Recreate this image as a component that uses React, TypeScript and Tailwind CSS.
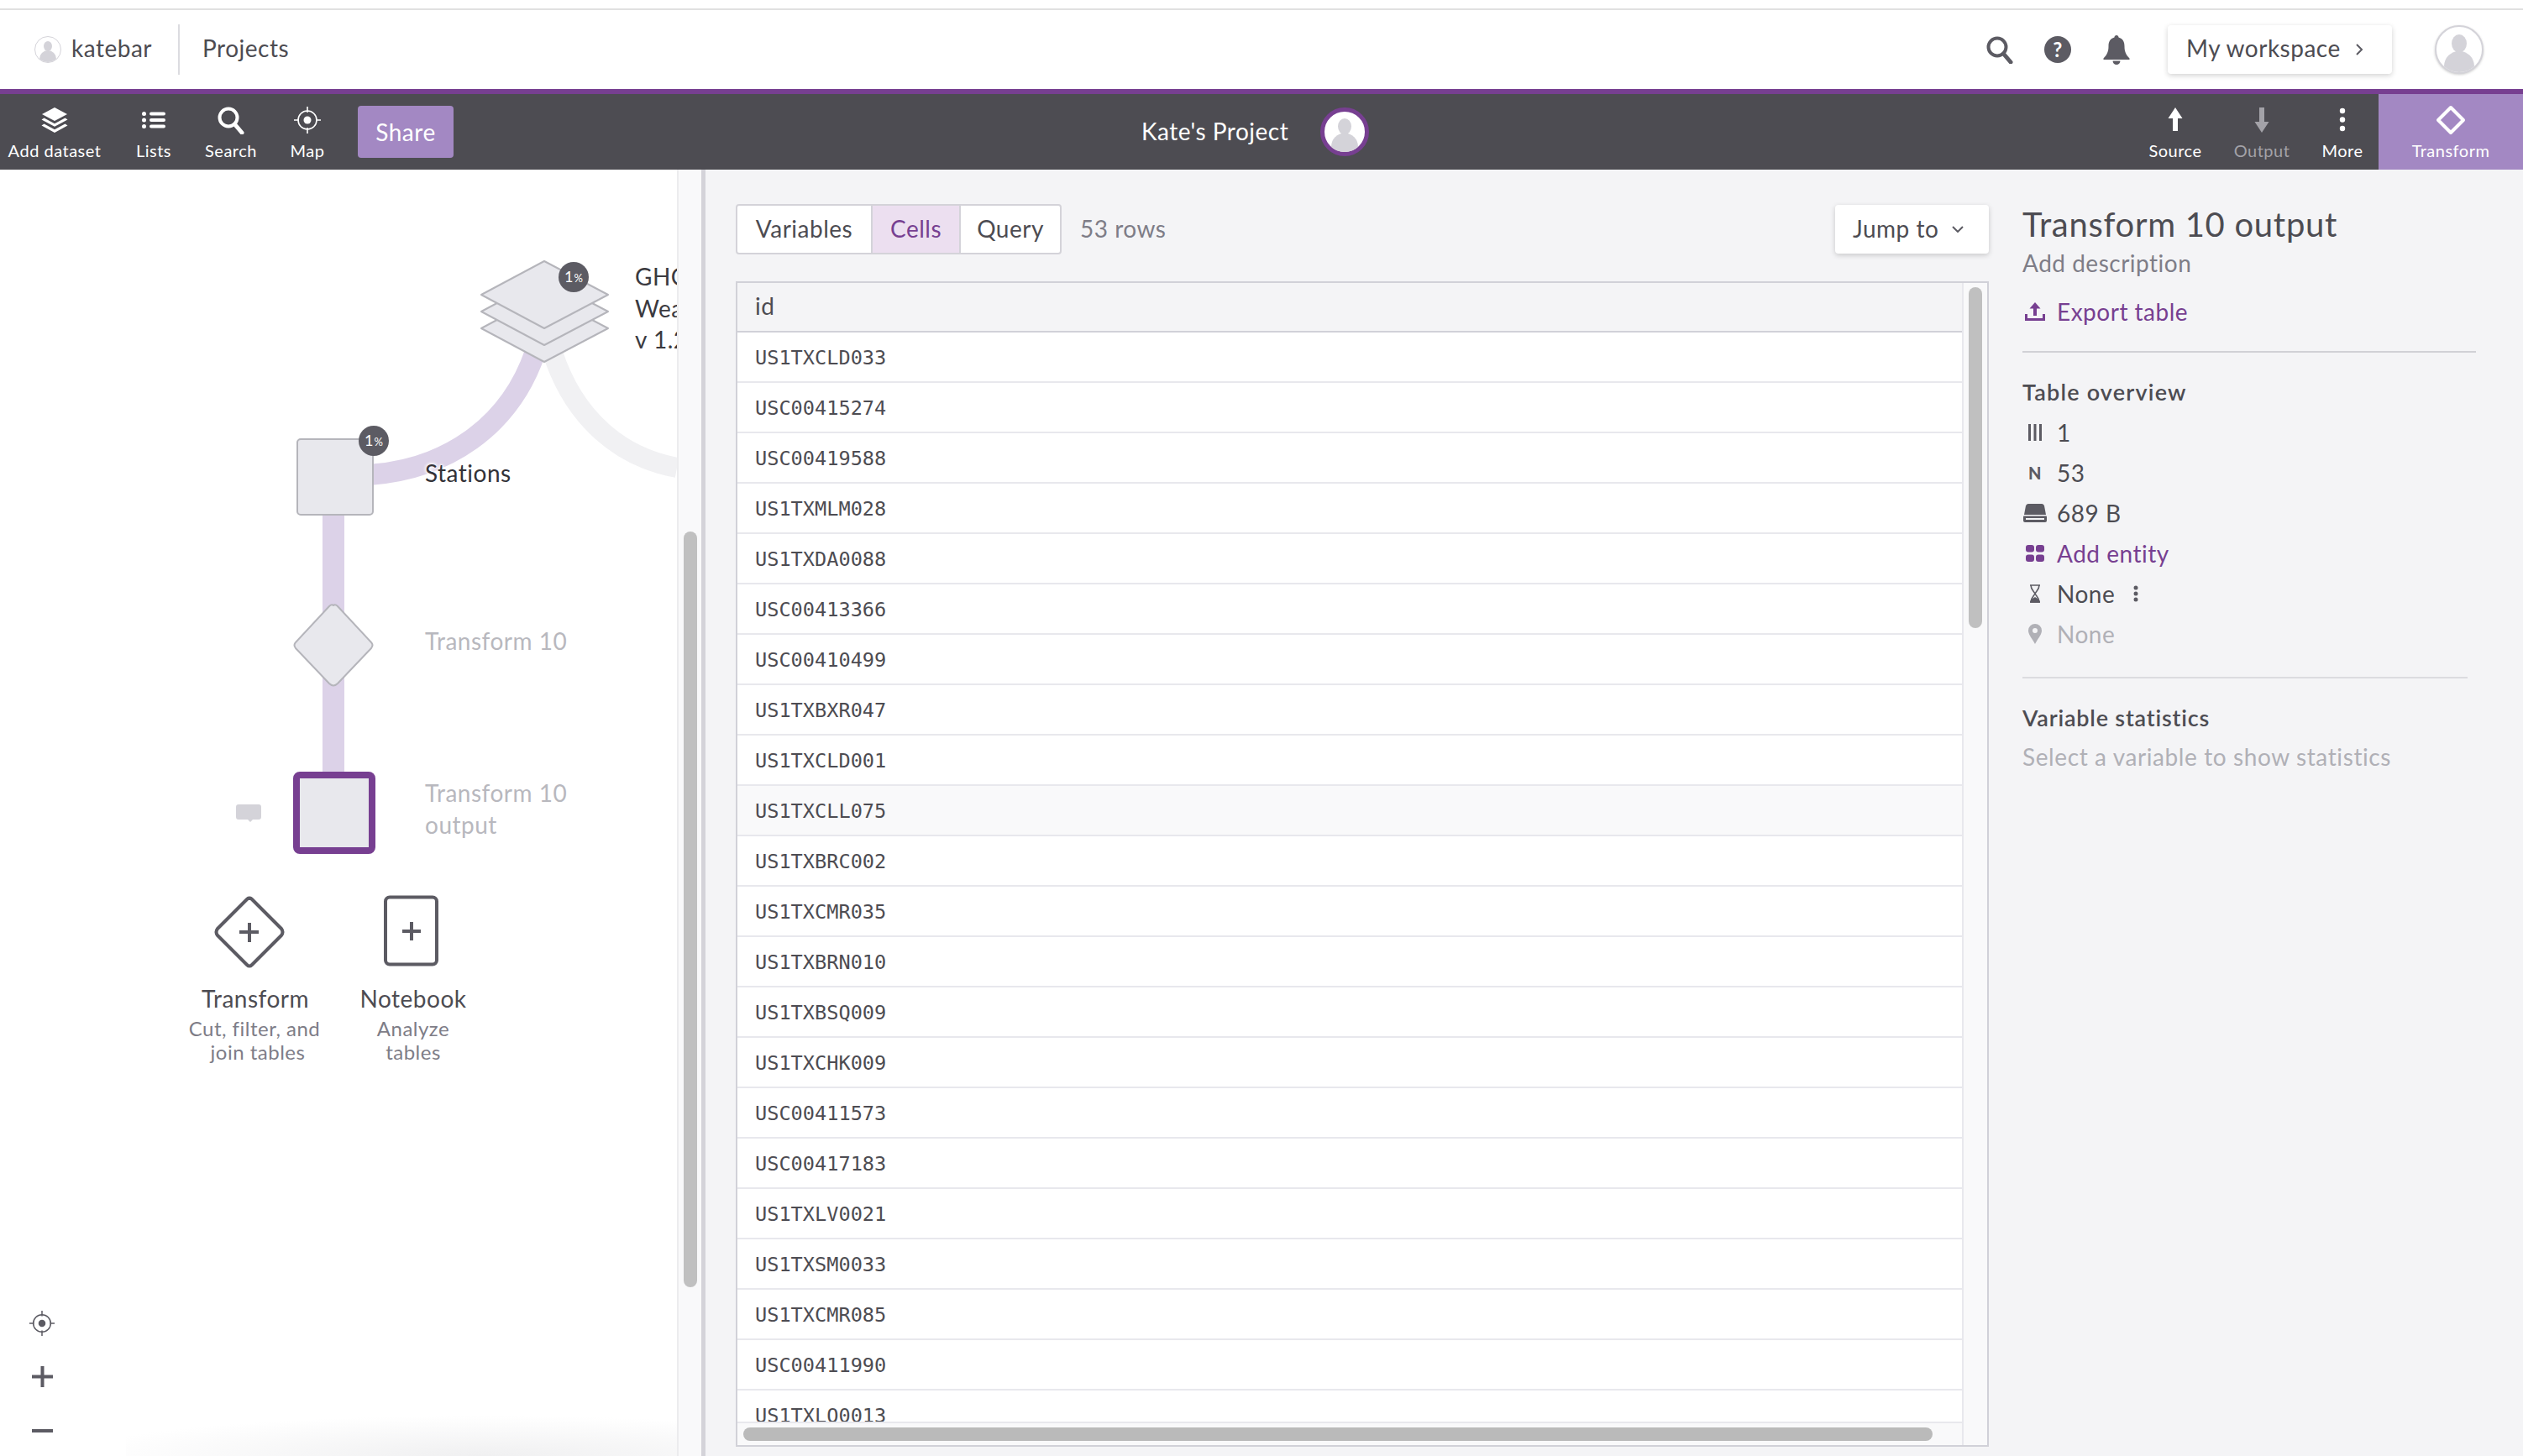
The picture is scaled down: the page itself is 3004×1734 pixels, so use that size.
import type { ReactNode } from "react";

const rowIds = [
  "US1TXCLD033", "USC00415274", "USC00419588", "US1TXMLM028", "US1TXDA0088", "USC00413366",
  "USC00410499", "US1TXBXR047", "US1TXCLD001", "US1TXCLL075", "US1TXBRC002", "US1TXCMR035",
  "US1TXBRN010", "US1TXBSQ009", "US1TXCHK009", "USC00411573", "USC00417183", "US1TXLV0021",
  "US1TXSM0033", "US1TXCMR085", "USC00411990", "US1TXLO0013",
];

function Avatar({ size, ring }: { size: string; ring: string }) {
  return (
    <div className={`${size} ${ring} rounded-full overflow-hidden bg-white shrink-0`}>
      <svg viewBox="0 0 60 60" className="w-full h-full">
        <ellipse cx="30" cy="22" rx="10" ry="12" fill="#d4d3d9" />
        <ellipse cx="30" cy="52" rx="20" ry="20" fill="#d4d3d9" />
      </svg>
    </div>
  );
}

function SearchIcon({ color }: { color: string }) {
  return (
    <svg width="34" height="34" viewBox="0 0 34 34" fill="none" stroke={color}>
      <circle cx="14" cy="14" r="10.5" strokeWidth="4" />
      <path d="M21.5 22 L30 32" strokeWidth="5" strokeLinecap="round" />
    </svg>
  );
}

function TargetIcon({ color, size }: { color: string; size: number }) {
  return (
    <svg width={size} height={size} viewBox="0 0 34 34" fill="none" stroke={color} strokeWidth="1.6">
      <circle cx="17" cy="17" r="11" />
      <circle cx="17" cy="17" r="4.5" fill={color} stroke="none" />
      <path d="M17 1V8M17 26V33M1 17H7M27 17H33" />
    </svg>
  );
}

function ToolItem({ icon, label, width, muted }: { icon: ReactNode; label: string; width: string; muted?: boolean }) {
  return (
    <div className={`${width} flex flex-col items-center pt-[14px] shrink-0`}>
      <div className="h-[34px] flex items-center justify-center">{icon}</div>
      <div className={`mt-[7px] text-[20px] leading-[24px] whitespace-nowrap ${muted ? "text-[#a3a2a8]" : "text-white"}`}>
        {label}
      </div>
    </div>
  );
}

function Header() {
  return (
    <div className="h-[94px] flex items-center pl-[41px] bg-white text-[#4d4c52]">
      <Avatar size="w-[32px] h-[32px]" ring="border border-[#d4d3d9]" />
      <span className="ml-[12px] pb-[4px] text-[28px]">katebar</span>
      <div className="ml-[31px] w-[2px] h-[60px] bg-[#dcdce0]" />
      <span className="ml-[27px] pb-[4px] text-[28px]">Projects</span>
      <div className="ml-auto flex items-center">
        <SearchIcon color="#5c5b63" />
        <div className="ml-[36px] w-[32px] h-[32px] rounded-full bg-[#5c5b63] text-white text-[24px] font-bold flex items-center justify-center">
          ?
        </div>
        <svg className="ml-[36px]" width="36" height="36" viewBox="0 0 36 36" fill="#5c5b63">
          <path d="M18 1c1.5 0 2.5 1 2.5 2.6C25.5 5 27.5 9 27.5 14c0 6 1.5 10 6 14.5v1.5H2.5v-1.5C7 24 8.500 20 8.500 14c0-5 2-9 7-10.400C15.500 2 16.500 1 18 1z" />
          <path d="M13.500 31.500h9c0 2.500-2 4.500-4.500 4.500s-4.500-2-4.500-4.500z" />
        </svg>
        <div className="ml-[43px] w-[267px] h-[58px] bg-white rounded-[4px] shadow-[0_2px_6px_rgba(0,0,0,0.18)] flex items-center pl-[22px] text-[28px]">
          <span className="pb-[4px]">My workspace</span>
          <svg className="ml-[17px]" width="10" height="16" viewBox="0 0 10 16" fill="none" stroke="#5c5b63" strokeWidth="2">
            <path d="M2 2l6 6-6 6" />
          </svg>
        </div>
        <div className="ml-[51px] mr-[47px]">
          <Avatar size="w-[58px] h-[58px]" ring="border-2 border-[#d4d3d9] shadow-[0_1px_3px_rgba(0,0,0,0.2)]" />
        </div>
      </div>
    </div>
  );
}

function Toolbar() {
  return (
    <div className="h-[90px] flex bg-[#4d4c52] text-white">
      <ToolItem
        width="w-[130px]"
        label="Add dataset"
        icon={
          <svg width="34" height="30" viewBox="0 0 34 30" fill="white">
            <path d="M17 0l15 8-15 8-15-8z" />
            <path d="M4.500 12.500L17 19.200l12.500-6.700 3 2L17 22.800 1.500 14.500z" />
            <path d="M4.500 19.500L17 26.200l12.500-6.700 3 2L17 30 1.500 21.500z" />
          </svg>
        }
      />
      <ToolItem
        width="w-[106px]"
        label="Lists"
        icon={
          <svg width="28" height="20" viewBox="0 0 28 20" fill="white">
            <circle cx="2.500" cy="2.500" r="2.500" />
            <circle cx="2.500" cy="10" r="2.500" />
            <circle cx="2.500" cy="17.500" r="2.500" />
            <rect x="9" y="0.500" width="19" height="4" rx="2" />
            <rect x="9" y="8" width="19" height="4" rx="2" />
            <rect x="9" y="15.500" width="19" height="4" rx="2" />
          </svg>
        }
      />
      <ToolItem width="w-[78px]" label="Search" icon={<SearchIcon color="white" />} />
      <ToolItem width="w-[104px]" label="Map" icon={<TargetIcon color="white" size={34} />} />
      <button className="ml-[8px] mt-[14px] w-[114px] h-[62px] rounded-[4px] bg-[#a388c3] text-white text-[28px]">
        Share
      </button>
      <div className="ml-[819px] flex items-center">
        <span className="pb-[3px] text-[28px]">Kate's Project</span>
        <div className="ml-[38px]">
          <Avatar size="w-[58px] h-[58px]" ring="border-[5px] border-[#773f91]" />
        </div>
      </div>
      <div className="ml-auto flex">
        <ToolItem
          width="w-[100px]"
          label="Source"
          icon={
            <svg width="20" height="30" viewBox="0 0 20 30" fill="white">
              <path d="M10 0l8.500 13H13v15H7V13H1.500z" />
            </svg>
          }
        />
        <ToolItem
          width="w-[106px]"
          label="Output"
          muted
          icon={
            <svg width="20" height="30" viewBox="0 0 20 30" fill="#a3a2a8">
              <path d="M7 0h6v17h5.500L10 30 1.500 17H7z" />
            </svg>
          }
        />
        <ToolItem
          width="w-[86px]"
          label="More"
          icon={
            <svg width="10" height="30" viewBox="0 0 10 30" fill="white">
              <circle cx="5" cy="4" r="3.200" />
              <circle cx="5" cy="14.500" r="3.200" />
              <circle cx="5" cy="25" r="3.200" />
            </svg>
          }
        />
        <ToolItem
          width="w-[172px] bg-[#a388c3]"
          label="Transform"
          icon={
            <svg width="36" height="36" viewBox="0 0 36 36" fill="none" stroke="white" strokeWidth="4" strokeLinejoin="round">
              <path d="M18 3l15 15-15 15L3 18z" />
            </svg>
          }
        />
      </div>
    </div>
  );
}

function Badge({ left, top }: { left: string; top: string }) {
  return (
    <div className={`absolute ${left} ${top} w-[36px] h-[36px] rounded-full bg-[#5c5b63] text-white flex items-baseline justify-center pt-[6px] text-[18px] leading-[22px] tracking-normal`}>
      1<span className="text-[13px] ml-[1px]">%</span>
    </div>
  );
}

function Diagram() {
  return (
    <div className="relative w-[806px] shrink-0 overflow-hidden bg-white">
      <svg className="absolute inset-0" width="806" height="1532" viewBox="0 202 806 1532" fill="none">
        <path d="M658 420 C684 500 740 545 806 557" stroke="#f1f1f3" strokeWidth="24" />
        <path d="M637 420 C606 510 530 558 444 565" stroke="#dcd2e8" strokeWidth="25" />
        <path d="M397 613 V920" stroke="#dcd2e8" strokeWidth="26" />
        <g fill="#e8e8ed" stroke="#b5b5bb" strokeWidth="2" strokeLinejoin="round">
          <path d="M648 351 L724 391 L648 431 L573 391 Z" />
          <path d="M648 331 L724 371 L648 411 L573 371 Z" />
          <path d="M648 311 L724 351 L648 391 L573 351 Z" />
          <rect x="354" y="523" width="90" height="90" rx="4" />
          <path d="M397 721 Q399 719 402 722 L442 765 Q445 768 442 772 L402 814 Q397 819 392 814 L352 772 Q349 768 352 765 L392 722 Q395 719 397 721 Z" />
        </g>
        <rect x="353" y="923" width="90" height="90" rx="4" fill="#e8e8ed" stroke="#773f91" strokeWidth="8" />
        <path d="M284 958h24a3 3 0 0 1 3 3v12a3 3 0 0 1-3 3h-7l-3 3-3-3h-11a3 3 0 0 1-3-3v-12a3 3 0 0 1 3-3z" fill="#d4d3d9" />
        <g fill="none" stroke="#5c5b63" strokeWidth="4" strokeLinejoin="round" strokeLinecap="round">
          <path d="M297 1070 Q298 1069 300 1071 L335 1106 Q338 1110 335 1114 L300 1149 Q297 1152 294 1149 L259 1114 Q256 1110 259 1106 L294 1071 Q296 1069 297 1070 Z" />
          <rect x="459" y="1068.500" width="61" height="80" rx="5" />
          <path d="M285 1110H308M297 1099V1122M479 1109H501M490 1098V1120" strokeLinecap="butt" />
        </g>
      </svg>

      <Badge left="left-[665px]" top="top-[110px]" />
      <Badge left="left-[427px]" top="top-[305px]" />

      <div className="absolute left-[756px] top-[109px] text-[28px] leading-[37.500px] text-[#3b3a40] whitespace-nowrap">
        GHCN
        <br />
        Weather
        <br />v 1.2
      </div>
      <div className="absolute left-[506px] top-[343px] text-[28px] leading-[37px] text-[#333238] [text-shadow:0_0_4px_white,0_0_4px_white,0_0_4px_white]">
        Stations
      </div>
      <div className="absolute left-[506px] top-[543px] text-[28px] leading-[37px] text-[#b8b8be]">Transform 10</div>
      <div className="absolute left-[506px] top-[723px] text-[28px] leading-[38px] text-[#b8b8be]">
        Transform 10
        <br />
        output
      </div>

      <div className="absolute left-[204px] top-[970px] w-[200px] text-center text-[28px] leading-[34px] text-[#4d4c52]">Transform</div>
      <div className="absolute left-[203px] top-[1009px] w-[200px] text-center text-[24px] leading-[28px] text-[#7e7d87]">
        Cut, filter, and
        <br />
        <span className="pl-[8px]">join tables</span>
      </div>
      <div className="absolute left-[392px] top-[970px] w-[200px] text-center text-[28px] leading-[34px] text-[#4d4c52]">Notebook</div>
      <div className="absolute left-[392px] top-[1009px] w-[200px] text-center text-[24px] leading-[28px] text-[#7e7d87]">
        Analyze
        <br />
        tables
      </div>

      <div className="absolute left-[34px] top-[1358px]">
        <TargetIcon color="#5c5b63" size={32} />
      </div>
      <div className="absolute left-[38px] top-[1425px] w-[25px] h-[25px]">
        <svg width="25" height="25" viewBox="0 0 25 25" stroke="#5c5b63" strokeWidth="4">
          <path d="M0 12.500H25M12.500 0V25" />
        </svg>
      </div>
      <div className="absolute left-[38px] top-[1500px] w-[25px] h-[4px] bg-[#5c5b63]" />

      <div className="absolute left-[150px] right-0 bottom-0 h-[48px] bg-[radial-gradient(ellipse_75%_100%_at_65%_100%,#f0f0f1,transparent)]" />
    </div>
  );
}

function DataTable() {
  return (
    <div className="mt-[32px] h-[1388px] flex border-2 border-[#d1d1d8] bg-white">
      <div className="flex-1 min-w-0 flex flex-col">
        <div className="h-[59px] shrink-0 bg-[#f4f4f6] border-b-2 border-[#d1d1d8] pl-[21px] pb-[3px] flex items-center text-[28px] text-[#4d4c52]">
          id
        </div>
        <div className="flex-1 min-h-0 overflow-hidden">
          {rowIds.map((id) => (
            <div
              key={id}
              className={`h-[60px] border-b-2 border-[#e8e8ed] pl-[21px] pt-[3px] flex items-center font-['DejaVu_Sans_Mono',monospace] text-[23.600px] tracking-normal text-[#4d4c52] ${
                id === "US1TXCLL075" ? "bg-[#f9f9fa]" : ""
              }`}
            >
              {id}
            </div>
          ))}
        </div>
        <div className="h-[28px] shrink-0 border-t-2 border-[#e8e8ed] bg-[#f9f9fa] pt-[5px] pl-[7px]">
          <div className="w-[1416px] h-[16px] rounded-full bg-[#bababa]" />
        </div>
      </div>
      <div className="w-[30px] shrink-0 border-l-2 border-[#e8e8ed] bg-[#f9f9fa] pt-[5px] pl-[6px]">
        <div className="w-[16px] h-[406px] rounded-full bg-[#c0c0c0]" />
      </div>
    </div>
  );
}

function CenterPanel() {
  return (
    <div className="w-[1528px] shrink-0 pl-[36px] pt-[41px]">
      <div className="flex items-center h-[60px]">
        <div className="flex h-full border-2 border-[#d4d3d9] rounded-[4px] bg-white text-[28px] text-[#4d4c52]">
          <div className="w-[159px] pb-[3px] flex items-center justify-center">Variables</div>
          <div className="w-[107px] pb-[3px] flex items-center justify-center bg-[#ecdff0] text-[#773f91] border-x-2 border-[#d4d3d9]">
            Cells
          </div>
          <div className="w-[118px] pb-[3px] flex items-center justify-center">Query</div>
        </div>
        <span className="ml-[22px] pb-[3px] text-[28px] text-[#7e7d87]">53 rows</span>
        <div className="ml-auto w-[183px] h-[58px] rounded-[4px] bg-white shadow-[0_2px_6px_rgba(0,0,0,0.18)] flex items-center pl-[21px] text-[28px] text-[#4d4c52]">
          <span className="pb-[3px]">Jump to</span>
          <svg className="ml-[16px]" width="14" height="8" viewBox="0 0 14 8" fill="none" stroke="#5c5b63" strokeWidth="2">
            <path d="M1 1l6 6 6-6" />
          </svg>
        </div>
      </div>
      <DataTable />
    </div>
  );
}

function StatRow({ icon, children, color }: { icon: ReactNode; children: ReactNode; color: string }) {
  return (
    <div className={`h-[48px] flex items-center text-[28px] ${color}`}>
      <div className="w-[30px] mr-[11px] flex items-center justify-center">{icon}</div>
      {children}
    </div>
  );
}

function RightPanel() {
  return (
    <div className="flex-1 pl-[40px] pt-[41px] pr-[56px] text-[#4d4c52]">
      <div className="h-[48px] flex items-center text-[40px] tracking-[0.7px]">Transform 10 output</div>
      <div className="mt-[4px] h-[36px] flex items-center text-[28px] text-[#7e7d87]">Add description</div>
      <div className="mt-[22px] h-[36px] flex items-center text-[28px] text-[#773f91]">
        <svg className="ml-[3px] mr-[14px]" width="24" height="22" viewBox="0 0 24 22" fill="#773f91">
          <path d="M12 0l6.500 7.500H14V16h-4V7.500H5.500z" />
          <path d="M0 14h3v5h18v-5h3v8H0z" />
        </svg>
        Export table
      </div>
      <div className="mt-[29px] h-[2px] bg-[#d1d1d6]" />
      <div className="mt-[29px] h-[36px] flex items-center text-[27px] font-semibold tracking-[1.2px]">Table overview</div>
      <div className="mt-[6px]">
        <StatRow
          color="text-[#4d4c52]"
          icon={
            <svg width="16" height="20" viewBox="0 0 16 20" fill="#5c5b63">
              <rect x="0" width="3" height="20" />
              <rect x="6.500" width="3" height="20" />
              <rect x="13" width="3" height="20" />
            </svg>
          }
        >
          1
        </StatRow>
        <StatRow color="text-[#4d4c52]" icon={<span className="text-[20px] font-black text-[#5c5b63]">N</span>}>
          53
        </StatRow>
        <StatRow
          color="text-[#4d4c52]"
          icon={
            <svg width="28" height="22" viewBox="0 0 28 22" fill="#5c5b63">
              <path d="M6 0h16c1.500 0 2.500 1 3 2.500L27 13H1L3 2.500C3.500 1 4.500 0 6 0z" />
              <path d="M1 14.500h26a1 1 0 0 1 1 1V20a2 2 0 0 1-2 2H2a2 2 0 0 1-2-2v-4.500a1 1 0 0 1 1-1zm2 2.500v2h22v-2z" fillRule="evenodd" />
            </svg>
          }
        >
          689 B
        </StatRow>
        <StatRow
          color="text-[#773f91]"
          icon={
            <svg width="22" height="20" viewBox="0 0 22 20" fill="#773f91">
              <rect x="0" y="0" width="10" height="8.500" rx="3" />
              <rect x="12" y="0" width="10" height="8.500" rx="3" />
              <rect x="0" y="11.500" width="10" height="8.500" rx="3" />
              <rect x="12" y="11.500" width="10" height="8.500" rx="3" />
            </svg>
          }
        >
          Add entity
        </StatRow>
        <StatRow
          color="text-[#4d4c52]"
          icon={
            <svg width="16" height="22" viewBox="0 0 16 22" fill="none" stroke="#5c5b63" strokeWidth="1.600">
              <path d="M2 1h12M2 21h12M3 1c0 5 3.500 7 5 10 1.500-3 5-5 5-10M3 21c0-5 3.500-7 5-10 1.500 3 5 5 5 10" />
              <path d="M3 21c0-3 3-4 5-5 2 1 5 2 5 5z" fill="#5c5b63" />
            </svg>
          }
        >
          None
          <svg className="ml-[22px]" width="6" height="20" viewBox="0 0 6 20" fill="#5c5b63">
            <circle cx="3" cy="3" r="2.500" />
            <circle cx="3" cy="10" r="2.500" />
            <circle cx="3" cy="17" r="2.500" />
          </svg>
        </StatRow>
        <StatRow
          color="text-[#b0b0b6]"
          icon={
            <svg width="16" height="24" viewBox="0 0 16 24" fill="#b0b0b6">
              <path d="M8 0a8 8 0 0 1 8 8c0 5-5 10-8 16C5 18 0 13 0 8a8 8 0 0 1 8-8zm0 5a3 3 0 1 0 0 6 3 3 0 0 0 0-6z" fillRule="evenodd" />
            </svg>
          }
        >
          None
        </StatRow>
      </div>
      <div className="mt-[27px] mr-[10px] h-[2px] bg-[#dcdce0]" />
      <div className="mt-[29px] h-[36px] flex items-center text-[27px] font-semibold tracking-[0.8px]">Variable statistics</div>
      <div className="mt-[10px] h-[36px] flex items-center text-[28px] tracking-[0.6px] text-[#b0b0b6] whitespace-nowrap">
        Select a variable to show statistics
      </div>
    </div>
  );
}

export default function App() {
  return (
    <div className="w-[3004px] h-[1734px] overflow-hidden flex flex-col bg-white font-['Lato',sans-serif] tracking-[0.5px]">
      <div className="h-[10px] shrink-0" />
      <div className="h-[2px] shrink-0 bg-[#e0e0e0]" />
      <Header />
      <div className="h-[6px] shrink-0 bg-[#773f91]" />
      <Toolbar />
      <div className="flex-1 min-h-0 flex">
        <Diagram />
        <div className="w-[29px] shrink-0 border-l-2 border-[#ececee] bg-[#f9f9fa] pt-[431px] pl-[6px]">
          <div className="w-[16px] h-[900px] rounded-full bg-[#c0c0c0]" />
        </div>
        <div className="w-[5px] shrink-0 bg-[#d4d3d9]" />
        <div className="flex-1 min-w-0 flex bg-[#f4f4f6]">
          <CenterPanel />
          <RightPanel />
        </div>
      </div>
    </div>
  );
}
